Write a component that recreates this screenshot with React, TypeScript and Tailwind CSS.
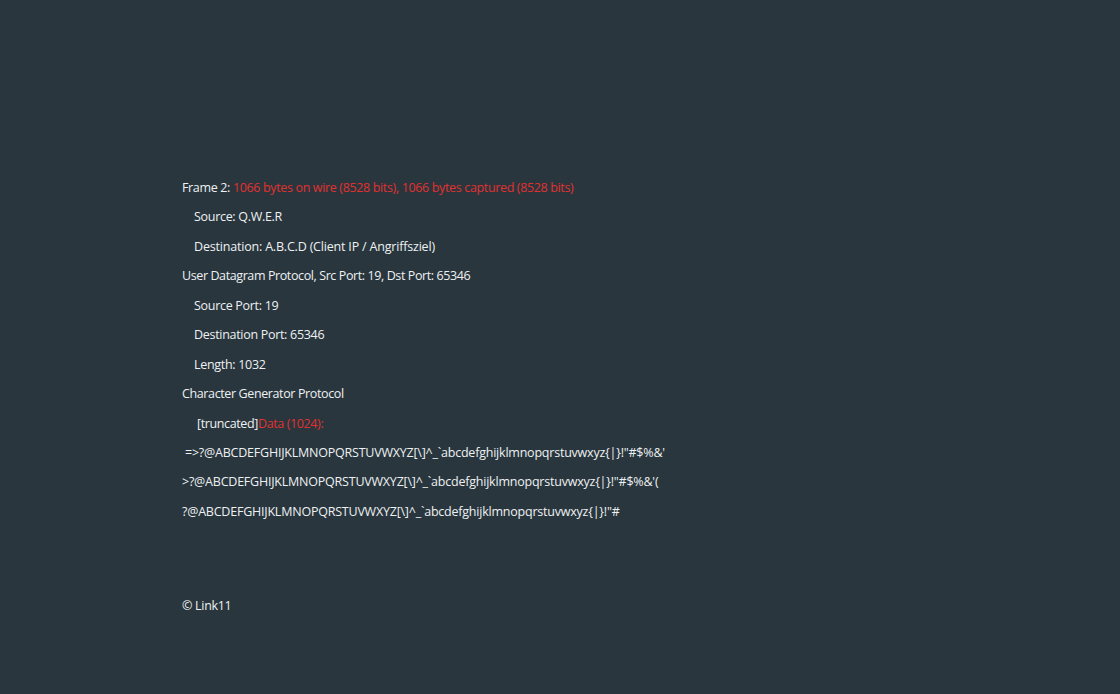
const lines: { text: React.ReactNode; cls: string }[] = [
  {
    text: (
      <>
        Frame 2:{" "}
        <span className="text-[#e0312f]">
          1066 bytes on wire (8528 bits), 1066 bytes captured (8528 bits)
        </span>
      </>
    ),
    cls: "pl-0 tracking-[-0.35px]",
  },
  { text: "Source: Q.W.E.R", cls: "pl-[12px] tracking-[-0.3px]" },
  { text: "Destination: A.B.C.D (Client IP / Angriffsziel)", cls: "pl-[12px] tracking-[-0.19px]" },
  { text: "User Datagram Protocol, Src Port: 19, Dst Port: 65346", cls: "pl-0 tracking-[-0.4px]" },
  { text: "Source Port: 19", cls: "pl-[12px] tracking-[-0.3px]" },
  { text: "Destination Port: 65346", cls: "pl-[12px] tracking-[-0.3px]" },
  { text: "Length: 1032", cls: "pl-[12px] tracking-[-0.3px]" },
  { text: "Character Generator Protocol", cls: "pl-0 tracking-[-0.38px]" },
  {
    text: (
      <>
        [truncated]<span className="text-[#e0312f]">Data (1024):</span>
      </>
    ),
    cls: "pl-[15px] tracking-[-0.38px]",
  },
  {
    text: "=>?@ABCDEFGHIJKLMNOPQRSTUVWXYZ[\\]^_`abcdefghijklmnopqrstuvwxyz{|}!\"#$%&'",
    cls: "pl-[3px] tracking-[-0.22px]",
  },
  {
    text: ">?@ABCDEFGHIJKLMNOPQRSTUVWXYZ[\\]^_`abcdefghijklmnopqrstuvwxyz{|}!\"#$%&'(",
    cls: "pl-0 tracking-[-0.22px]",
  },
  {
    text: "?@ABCDEFGHIJKLMNOPQRSTUVWXYZ[\\]^_`abcdefghijklmnopqrstuvwxyz{|}!\"#",
    cls: "pl-0 tracking-[-0.22px]",
  },
];

export default function App() {
  return (
    <div className="w-[1120px] h-[694px] bg-[#29363e] text-[#eef1f2] font-['Open_Sans',sans-serif] text-[12.5px] pt-[178px] pl-[182px]">
      <div className="flex flex-col">
        {lines.map((l, i) => (
          <div key={i} className={`h-[29.45px] leading-[20px] whitespace-pre ${l.cls}`}>
            {l.text}
          </div>
        ))}
      </div>
      <div className="mt-[65px] leading-[20px] tracking-[-0.3px]">© Link11</div>
    </div>
  );
}
